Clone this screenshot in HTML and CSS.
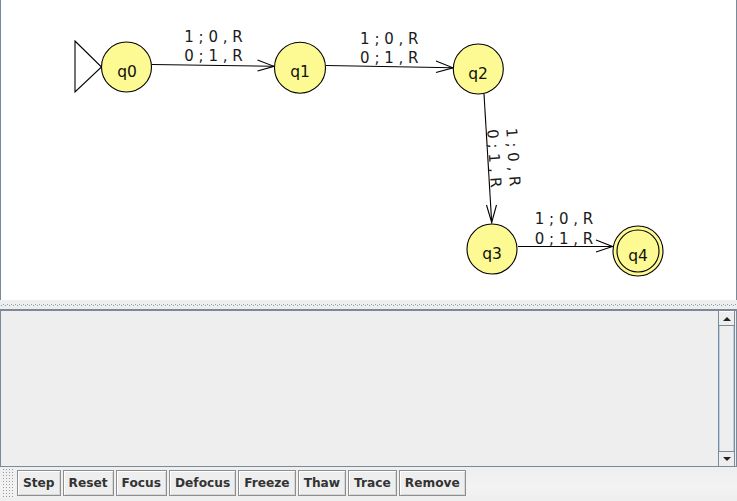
FILE: index.html
```html
<!DOCTYPE html>
<html>
<head>
<meta charset="utf-8">
<title>Turing Machine</title>
<link rel="stylesheet" href="styles.css">
</head>
<body>
<div class="app">
  <div class="canvas">
    <svg class="diagram" width="735" height="300" viewBox="0 0 735 300" xmlns="http://www.w3.org/2000/svg">
      <g class="edges" fill="none" stroke="#000" stroke-width="1.1">
        <line x1="151" y1="64.5" x2="273" y2="66.3"/>
        <polyline points="256.5,60 273,66.3 256.5,71"/>
        <line x1="325" y1="65.5" x2="452" y2="67.8"/>
        <polyline points="435,61 452,67.8 435,72.5"/>
        <line x1="483" y1="94" x2="490.7" y2="222.5"/>
        <polyline points="485.5,205 490.7,222.5 495.5,205"/>
        <line x1="517" y1="246.5" x2="611.5" y2="246.5"/>
        <polyline points="595,240 611.5,246.5 595,252"/>
      </g>
      <polygon points="74,41 100.5,67 74,92" fill="#fff" stroke="#000" stroke-width="1.1"/>
      <g class="states" fill="#fdfa93" stroke="#000" stroke-width="1.1">
        <circle cx="125.5" cy="67" r="25"/>
        <circle cx="299" cy="67.7" r="25.5"/>
        <circle cx="477.3" cy="69" r="25"/>
        <circle cx="491" cy="249" r="25"/>
        <circle cx="637" cy="251" r="25"/>
        <circle cx="637" cy="251" r="21"/>
      </g>
      <g class="state-labels" text-anchor="middle">
        <text x="126" y="76.5">q0</text>
        <text x="299" y="77">q1</text>
        <text x="477" y="78.5">q2</text>
        <text x="491" y="258.5">q3</text>
        <text x="637" y="260.5">q4</text>
      </g>
      <g class="edge-labels" text-anchor="middle">
        <text x="212.5" y="41.5">1 ; 0 , R</text>
        <text x="212.5" y="60.7">0 ; 1 , R</text>
        <text x="388.3" y="43.5">1 ; 0 , R</text>
        <text x="388.3" y="63">0 ; 1 , R</text>
        <text x="563" y="224">1 ; 0 , R</text>
        <text x="563" y="243.5">0 ; 1 , R</text>
        <g transform="translate(507,157.5) rotate(86.5)">
          <text x="0" y="0">1 ; 0 , R</text>
          <text x="0" y="19">0 ; 1 , R</text>
        </g>
      </g>
    </svg>
  </div>
  <div class="divider"></div>
  <div class="console">
    <div class="console-body"></div>
    <div class="vscroll">
      <div class="sb-btn sb-up"><span class="tri-up"></span></div>
      <div class="sb-track"></div>
      <div class="sb-btn sb-down"><span class="tri-down"></span></div>
    </div>
  </div>
  <div class="toolbar">
    <div class="grip"></div>
    <div class="buttons">
      <button class="btn">Step</button>
      <button class="btn">Reset</button>
      <button class="btn">Focus</button>
      <button class="btn">Defocus</button>
      <button class="btn">Freeze</button>
      <button class="btn">Thaw</button>
      <button class="btn">Trace</button>
      <button class="btn">Remove</button>
    </div>
  </div>
</div>
</body>
</html>
```
FILE: styles.css
```css
* { box-sizing: border-box; }
html, body {
  margin: 0;
  padding: 0;
  width: 737px;
  height: 501px;
  overflow: hidden;
  background: #eeeeee;
  font-family: "DejaVu Sans", "Liberation Sans", sans-serif;
}
.app {
  display: flex;
  flex-direction: column;
  width: 737px;
  height: 501px;
}
.canvas {
  height: 300px;
  background: #ffffff;
  border-left: 1px solid #7a8a99;
  border-right: 1px solid #7a8a99;
  flex: none;
}
.diagram { display: block; }
.state-labels text {
  font-family: "DejaVu Sans", sans-serif;
  font-size: 15.5px;
  fill: #111;
}
.edge-labels text {
  font-family: "DejaVu Sans", sans-serif;
  font-size: 15px;
  fill: #1a1a1a;
}
.divider {
  height: 9px;
  flex: none;
  background-color: #eeeeee;
  background-image:
    linear-gradient(to right, #8b9db0 0 1px, transparent 1px 4px),
    linear-gradient(to right, #8b9db0 0 1px, transparent 1px 4px);
  background-size: 4px 1px, 4px 1px;
  background-repeat: repeat-x, repeat-x;
  background-position: 3px 4px, 5px 5px;
}
.console {
  height: 158px;
  flex: none;
  display: flex;
  border-top: 2px solid #7a8a99;
  border-left: 1px solid #7a8a99;
  border-right: 1px solid #7a8a99;
  border-bottom: 1px solid #7a8a99;
  background: #eeeeee;
}
.console-body { flex: 1; }
.vscroll {
  width: 17px;
  display: flex;
  flex-direction: column;
  border-left: 1px solid #7a8a99;
  border-right: 1px solid #7a8a99;
  margin-right: 1px;
}
.sb-btn {
  height: 15px;
  flex: none;
  display: flex;
  align-items: center;
  justify-content: center;
  background: #eeeeee;
  border-top: 1px solid #ffffff;
}
.sb-up { border-bottom: 1px solid #7a8a99; }
.sb-down { border-top: 1px solid #7a8a99; height: 15px; }
.sb-track {
  flex: 1;
  background: #eeeeee;
  border-left: 1px solid #b8cfe5;
  border-right: 1px solid #b8cfe5;
}
.tri-up {
  width: 0; height: 0;
  border-left: 4px solid transparent;
  border-right: 4px solid transparent;
  border-bottom: 4px solid #222;
}
.tri-down {
  width: 0; height: 0;
  border-left: 4px solid transparent;
  border-right: 4px solid transparent;
  border-top: 4px solid #222;
}
.toolbar {
  height: 34px;
  flex: none;
  display: flex;
  align-items: flex-start;
  padding: 3px 0 0 3px;
  background: linear-gradient(#eeeeee, #f3f3f3 60%, #eeeeee);
}
.grip {
  width: 10px;
  height: 28px;
  margin-top: -1px;
  margin-right: 4px;
  background-image: radial-gradient(circle at 0.5px 0.5px, #9a9a9a 0.6px, transparent 0.9px);
  background-size: 3px 3px;
}
.buttons {
  display: flex;
  gap: 2px;
}
.btn {
  height: 26px;
  padding: 0 5px;
  margin: 0;
  border: 1px solid #8e8e8e;
  box-shadow: inset 1px 1px 0 #ffffff, inset -1px -1px 0 #d8d8d8;
  background: #eeeeee;
  font-family: "DejaVu Sans", sans-serif;
  font-weight: bold;
  font-size: 12.2px;
  color: #333333;
  line-height: 24px;
}
```
